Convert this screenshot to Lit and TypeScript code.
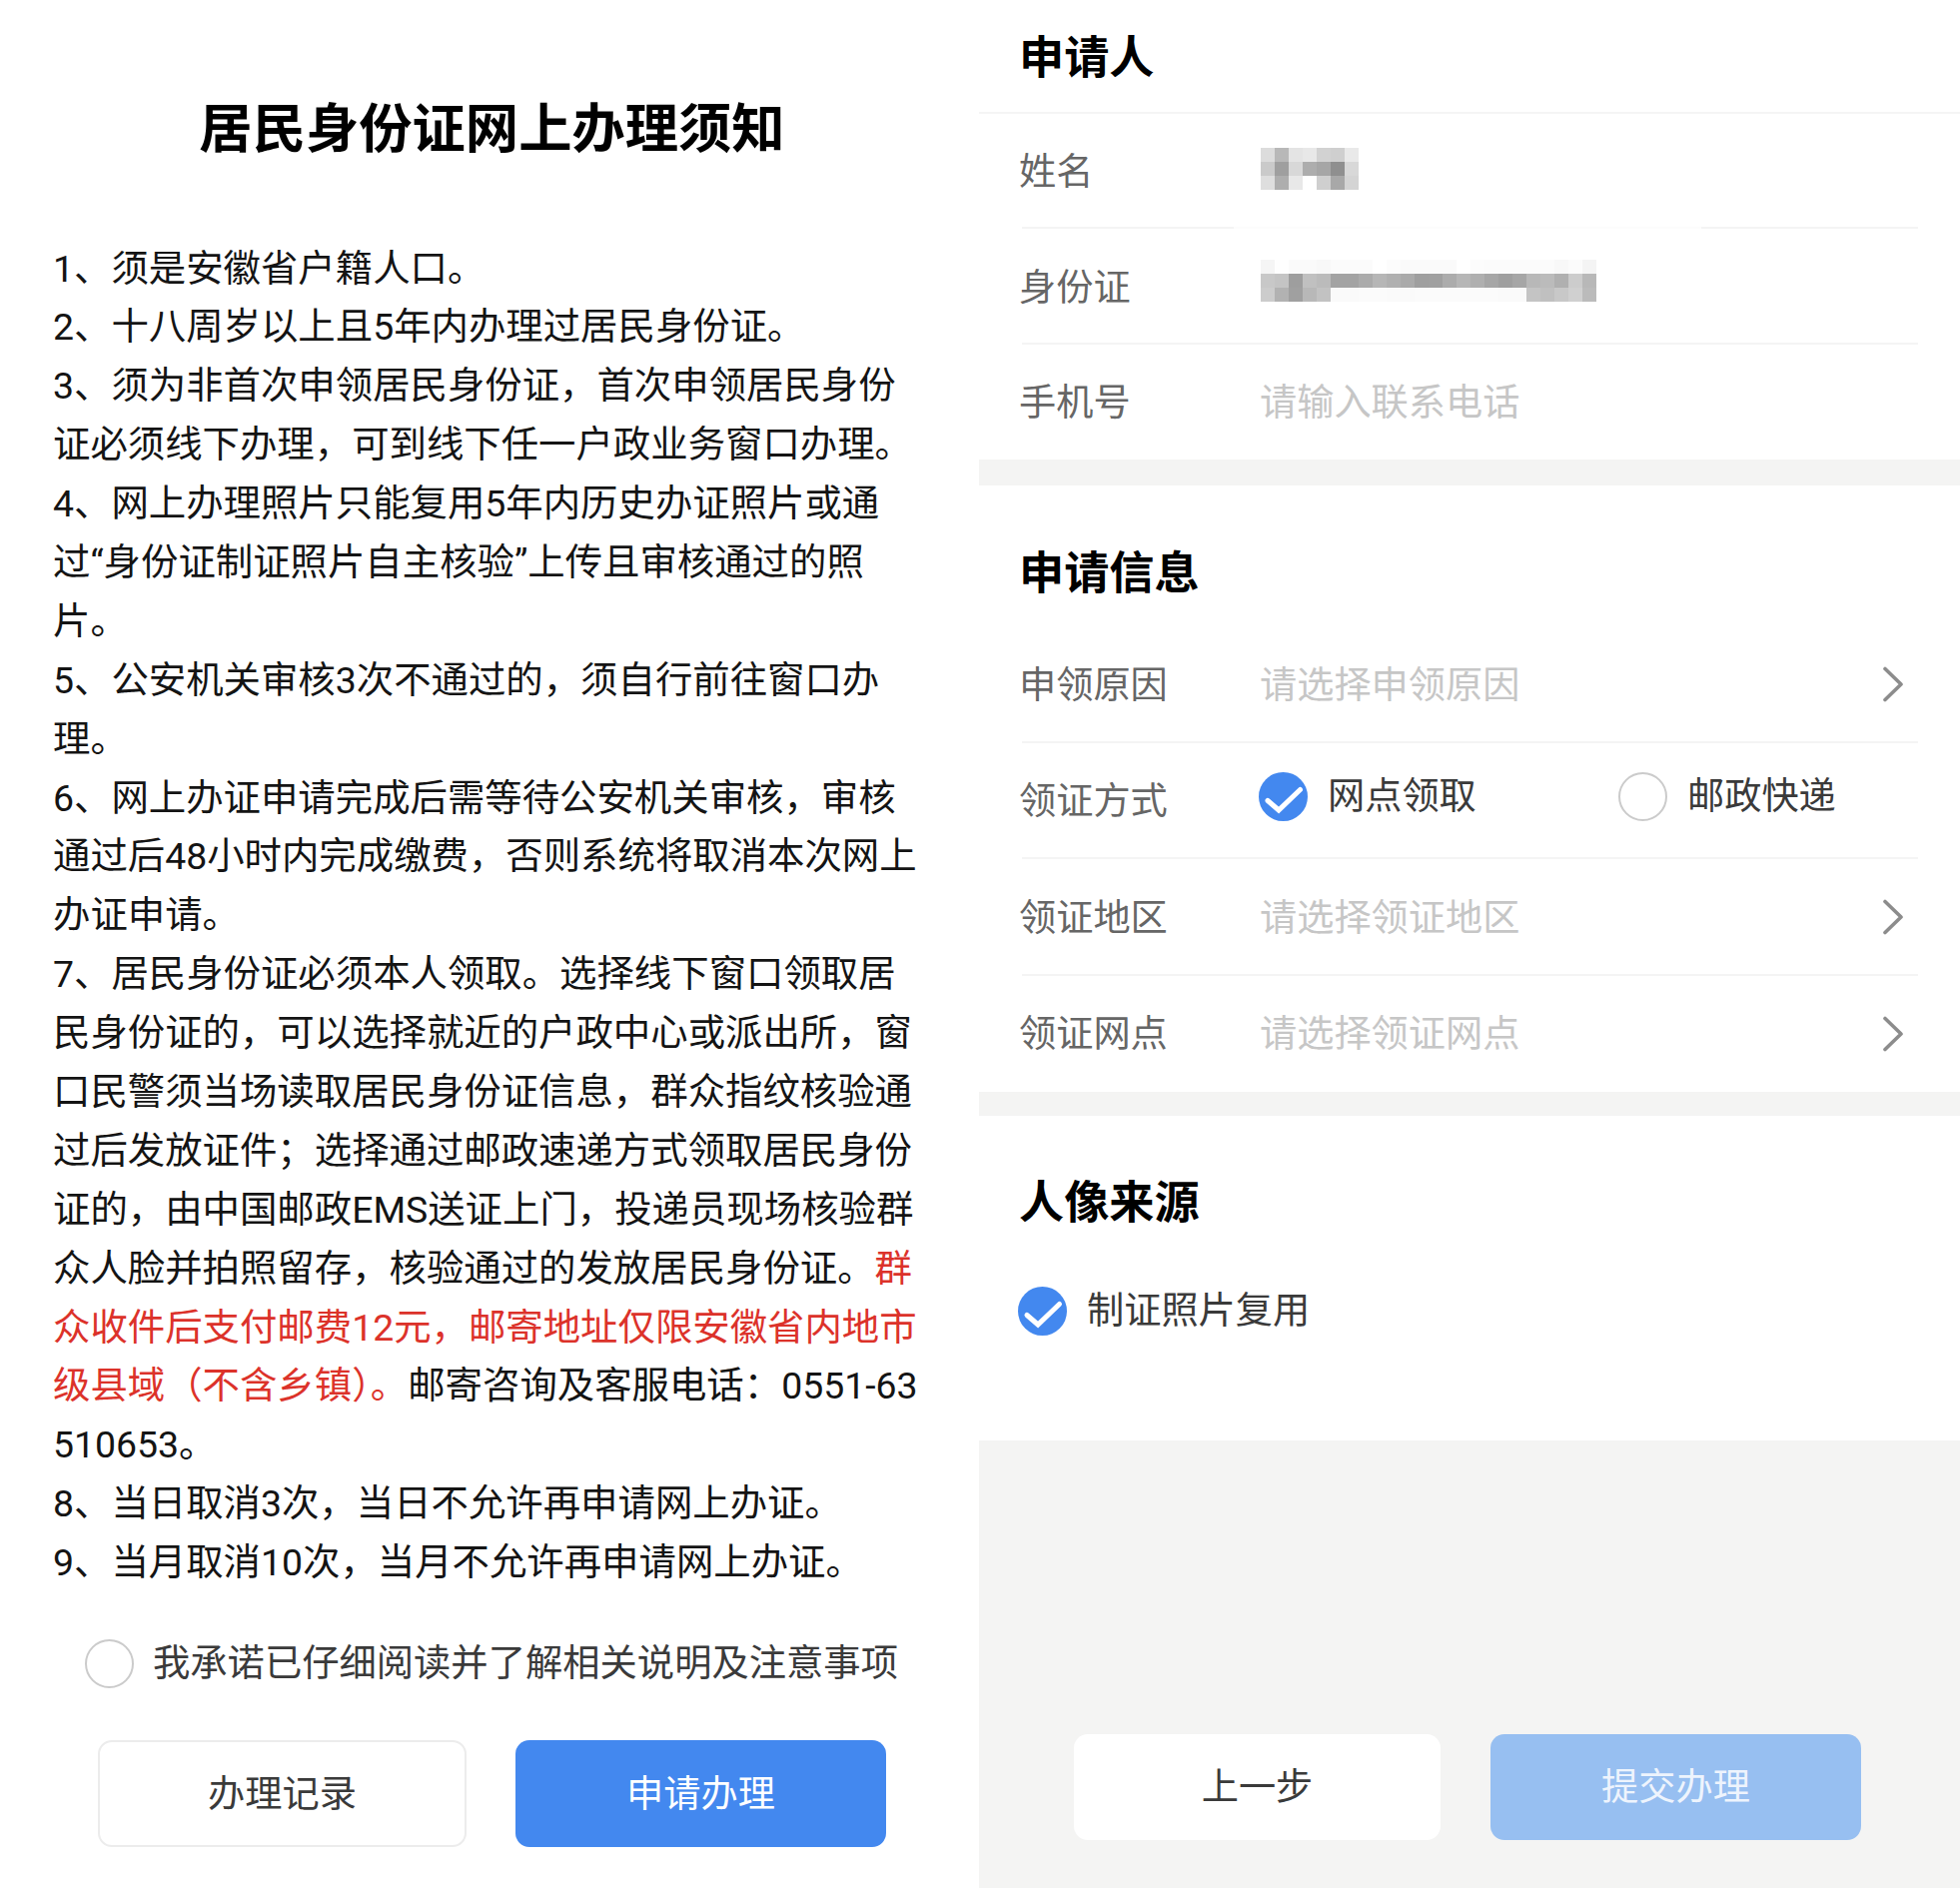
import { LitElement, html, css, svg } from "lit";
import { customElement } from "lit/decorators.js";

const red = (t: string) => html`<span class="red">${t}</span>`;

const LINES: unknown[] = [
  "1、须是安徽省户籍人口。",
  "2、十八周岁以上且5年内办理过居民身份证。",
  "3、须为非首次申领居民身份证，首次申领居民身份",
  "证必须线下办理，可到线下任一户政业务窗口办理。",
  "4、网上办理照片只能复用5年内历史办证照片或通",
  "过“身份证制证照片自主核验”上传且审核通过的照",
  "片。",
  "5、公安机关审核3次不通过的，须自行前往窗口办",
  "理。",
  "6、网上办证申请完成后需等待公安机关审核，审核",
  "通过后48小时内完成缴费，否则系统将取消本次网上",
  "办证申请。",
  "7、居民身份证必须本人领取。选择线下窗口领取居",
  "民身份证的，可以选择就近的户政中心或派出所，窗",
  "口民警须当场读取居民身份证信息，群众指纹核验通",
  "过后发放证件；选择通过邮政速递方式领取居民身份",
  "证的，由中国邮政EMS送证上门，投递员现场核验群",
  html`众人脸并拍照留存，核验通过的发放居民身份证。${red("群")}`,
  red("众收件后支付邮费12元，邮寄地址仅限安徽省内地市"),
  html`${red("级县域（不含乡镇）。")}邮寄咨询及客服电话：0551-63`,
  "510653。",
  "8、当日取消3次，当日不允许再申请网上办证。",
  "9、当月取消10次，当月不允许再申请网上办证。",
];

const NAME_MOSAIC = [
  ["dc", "b8", "e4", "e8", "d2", "cf", "e9"],
  ["ca", "9f", "d8", "ad", "a6", "8f", "d8"],
  ["de", "ae", "e8", "ff", "cf", "a8", "d4"],
];
const ID_MOSAIC = [
  ["f5", "fe", "fa", "fa", "f8", "fb", "fb", "fb", "ff", "fc", "fa", "fa", "fa", "fa", "ff", "fc", "fb", "fb", "fb", "fb", "fb", "f8", "fb", "f4"],
  ["c8", "c4", "9e", "c0", "bb", "a3", "a3", "ab", "b6", "b0", "aa", "9f", "a0", "ac", "b6", "af", "a6", "9f", "a6", "b8", "bb", "b0", "cc", "b8"],
  ["cc", "b2", "a0", "b8", "c2", "fa", "fa", "fb", "fb", "fa", "fa", "fb", "fb", "fb", "fb", "fb", "fb", "fa", "fa", "c4", "c0", "c8", "d0", "bb"],
];

const mosaic = (rows: string[][], cls: string) => html`<div class="mosaic ${cls}">
  ${rows.map(
    (r) => html`<div class="mrow">
      ${r.map((c) => html`<i class="cell" style="background:#${c}${c}${c}"></i>`)}
    </div>`,
  )}
</div>`;

const checked = html`<svg class="radio" viewBox="0 0 49 49" aria-hidden="true">
  <circle cx="24.5" cy="24.5" r="24.5" fill="#4388ef"></circle>
  ${svg`<path d="M9 28.5 L20 38 L41.5 17.5" fill="none" stroke="#fff" stroke-width="5" stroke-linecap="round" stroke-linejoin="miter"></path>`}
</svg>`;
const empty = html`<svg class="radio" viewBox="0 0 49 49" aria-hidden="true">
  <circle cx="24.5" cy="24.5" r="23.5" fill="#fff" stroke="#cbcbcb" stroke-width="2"></circle>
</svg>`;
const chevron = html`<svg class="chev" viewBox="0 0 22 36" aria-hidden="true">
  <path d="M3 2.5 L19 18 L3 33.5" fill="none" stroke="#8c8c8c" stroke-width="3.6" stroke-linecap="round" stroke-linejoin="round"></path>
</svg>`;

@customElement("app-root")
export class AppRoot extends LitElement {
  static styles = css`
    :host {
      display: block;
      width: 1962px;
      height: 1890px;
      background: #fff;
      font-family: Roboto, "Noto Sans CJK SC", sans-serif;
      font-size: 37.2px;
      overflow: hidden;
    }
    .page {
      display: grid;
      grid-template-columns: 980px 982px;
      height: 1890px;
    }
    .left {
      display: flex;
      flex-direction: column;
    }
    .title {
      margin: 98px 0 0 0;
      padding-left: 5px;
      height: 64px;
      line-height: 64px;
      text-align: center;
      font-size: 53.3px;
      font-weight: 700;
      color: #000;
    }
    .notice {
      margin-top: 77.5px;
      padding-left: 53px;
      font-size: 37.4px;
    }
    .line {
      height: 58.9px;
      line-height: 58.9px;
      white-space: nowrap;
      color: #141414;
    }
    .red {
      color: #dc322a;
    }
    .agree {
      display: flex;
      align-items: center;
      gap: 19px;
      height: 49px;
      margin: 47px 0 0 85px;
      font-size: 37.3px;
      line-height: 49px;
      color: #3a3a3a;
    }
    .radio {
      width: 49px;
      height: 49px;
      flex: none;
      display: block;
    }
    .btns {
      display: flex;
      margin: 52px 0 0 98px;
      gap: 49px;
    }
    .btn {
      box-sizing: border-box;
      display: flex;
      align-items: center;
      justify-content: center;
      height: 107px;
      padding-bottom: 4px;
      border-radius: 14px;
    }
    .b-outline {
      width: 369px;
      border: 2px solid #ececec;
      background: #fff;
      color: #3a3a3a;
    }
    .b-primary {
      width: 371px;
      background: #4388ef;
      color: #fff;
    }
    .right {
      display: flex;
      flex-direction: column;
      background: #f4f4f3;
    }
    .sec {
      background: #fff;
    }
    .sec-1 {
      height: 460px;
    }
    .sec-2 {
      margin-top: 26px;
      height: 607px;
    }
    .sec-3 {
      margin-top: 24px;
      height: 325px;
    }
    .head1 {
      box-sizing: border-box;
      height: 114px;
      padding: 0 0 2.5px 40px;
      border-bottom: 2px solid #f5f5f5;
      display: flex;
      align-items: center;
      font-size: 45.2px;
      font-weight: 700;
      color: #000;
    }
    .head {
      box-sizing: border-box;
      height: 141px;
      padding: 28.5px 0 0 40px;
      display: flex;
      align-items: center;
      font-size: 45.2px;
      font-weight: 700;
      color: #000;
    }
    .sec-3 .head {
      padding-top: 26px;
    }
    .row {
      box-sizing: border-box;
      height: 115.4px;
      margin: 0 42px 0 43px;
      display: flex;
      align-items: center;
      border-bottom: 2px solid #f4f4f4;
    }
    .sec-2 .row {
      height: 116.5px;
    }
    .row.last {
      border-bottom-color: transparent;
    }
    .row.gap {
      border-bottom-color: transparent;
      background: linear-gradient(
          to right,
          #f4f4f4 0 212px,
          #fcfcfc 212px 680px,
          #f4f4f4 680px
        )
        bottom / 100% 2px no-repeat;
      background-origin: border-box;
      background-clip: border-box;
    }
    .label {
      flex: none;
      width: 241px;
      margin: 0 0 3px -3px;
      color: #666;
    }
    .ph {
      flex: 1;
      margin-bottom: 3px;
      color: #c6c6c6;
    }
    .chev {
      width: 22px;
      height: 36px;
      flex: none;
      margin: 2px 14px 0 0;
    }
    .mosaic {
      margin-left: 1px;
    }
    .m-name {
      margin-bottom: 3px;
    }
    .m-id {
      margin-bottom: 10px;
    }
    .mrow {
      display: flex;
    }
    .cell {
      display: block;
      width: 14px;
      height: 14px;
    }
    .opts {
      display: flex;
      height: 49px;
      margin-bottom: 6px;
      line-height: 49px;
    }
    .opt {
      display: flex;
      align-items: center;
      gap: 20px;
      color: #3a3a3a;
    }
    .opt-first {
      width: 360px;
      margin-left: -1px;
    }
    .photo {
      display: flex;
      align-items: center;
      gap: 20px;
      height: 49px;
      margin: 29.5px 0 0 39px;
      line-height: 49px;
      color: #3a3a3a;
    }
    .foot {
      display: flex;
      gap: 50px;
      padding: 294px 0 0 95px;
    }
    .f-back {
      width: 367px;
      height: 106px;
      padding-bottom: 6px;
      background: #fff;
      color: #3a3a3a;
    }
    .f-submit {
      width: 371px;
      height: 106px;
      padding-bottom: 6px;
      background: #97bff1;
      color: #eef4fd;
    }
  `;

  render() {
    return html`<div class="page">
      <section class="left">
        <h1 class="title">居民身份证网上办理须知</h1>
        <div class="notice">${LINES.map((l) => html`<div class="line">${l}</div>`)}</div>
        <div class="agree">${empty}<span>我承诺已仔细阅读并了解相关说明及注意事项</span></div>
        <div class="btns">
          <div class="btn b-outline">办理记录</div>
          <div class="btn b-primary">申请办理</div>
        </div>
      </section>
      <section class="right">
        <div class="sec sec-1">
          <div class="head1">申请人</div>
          <div class="row gap"><span class="label">姓名</span>${mosaic(NAME_MOSAIC, "m-name")}</div>
          <div class="row"><span class="label">身份证</span>${mosaic(ID_MOSAIC, "m-id")}</div>
          <div class="row last"><span class="label">手机号</span><span class="ph">请输入联系电话</span></div>
        </div>
        <div class="sec sec-2">
          <div class="head">申请信息</div>
          <div class="row"><span class="label">申领原因</span><span class="ph">请选择申领原因</span>${chevron}</div>
          <div class="row">
            <span class="label">领证方式</span>
            <div class="opts">
              <div class="opt opt-first">${checked}<span>网点领取</span></div>
              <div class="opt">${empty}<span>邮政快递</span></div>
            </div>
          </div>
          <div class="row"><span class="label">领证地区</span><span class="ph">请选择领证地区</span>${chevron}</div>
          <div class="row last"><span class="label">领证网点</span><span class="ph">请选择领证网点</span>${chevron}</div>
        </div>
        <div class="sec sec-3">
          <div class="head">人像来源</div>
          <div class="photo">${checked}<span>制证照片复用</span></div>
        </div>
        <div class="foot">
          <div class="btn f-back">上一步</div>
          <div class="btn f-submit">提交办理</div>
        </div>
      </section>
    </div>`;
  }
}
